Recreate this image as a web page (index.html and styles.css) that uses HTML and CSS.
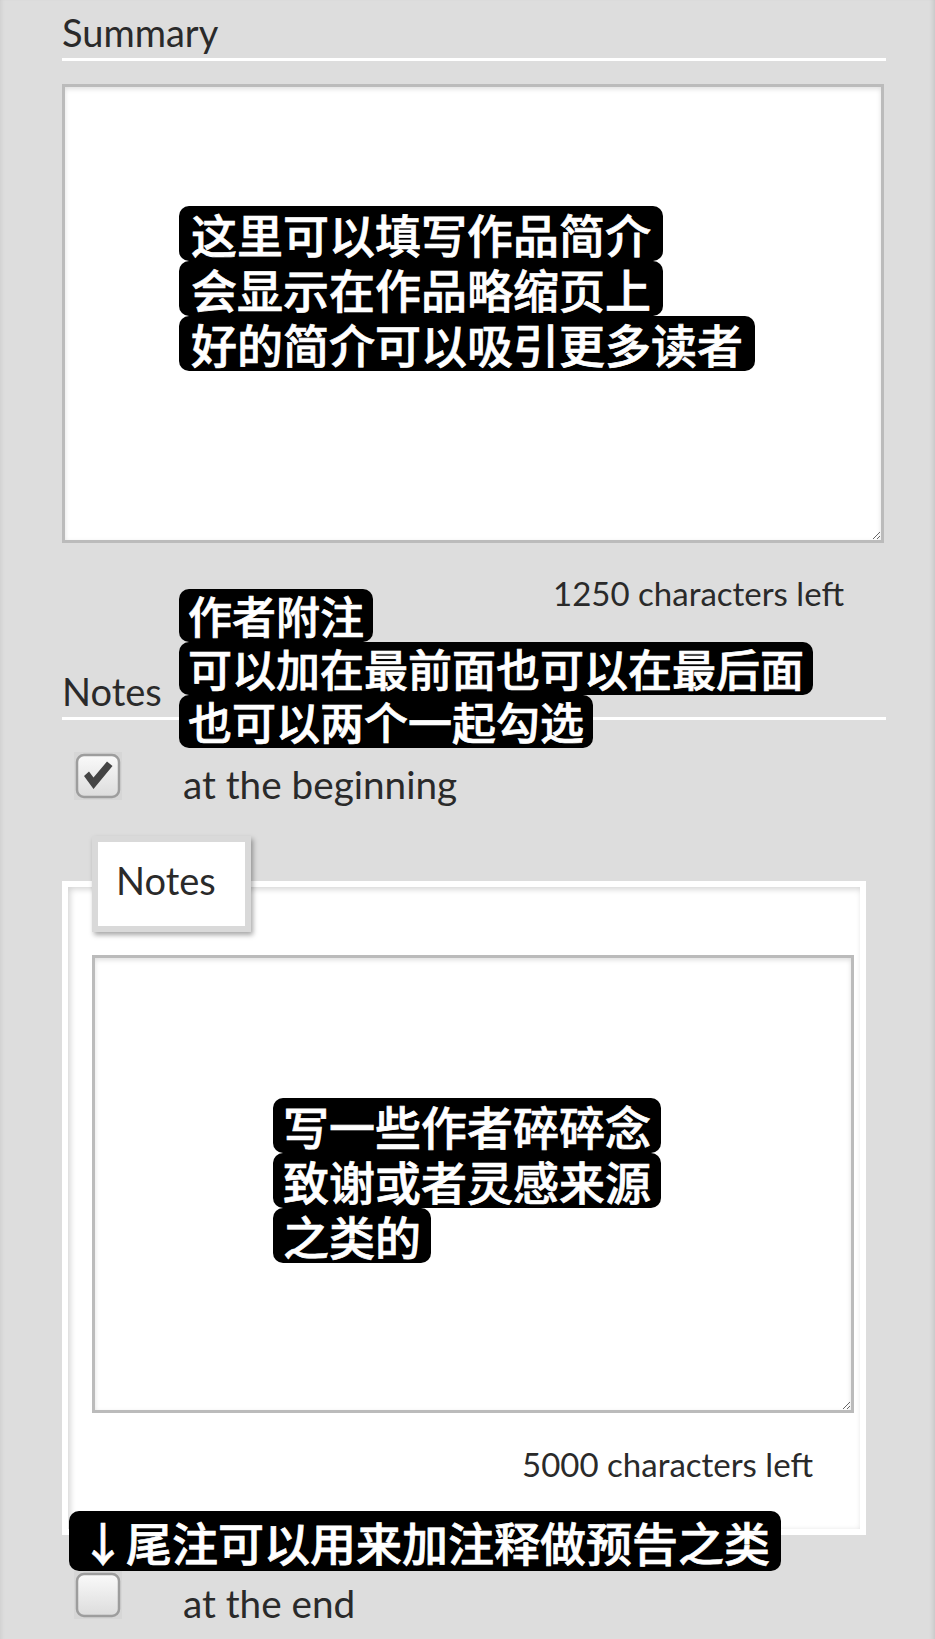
FILE: index.html
```html
<!DOCTYPE html>
<html lang="en">
<head>
<meta charset="utf-8">
<title>Summary and Notes</title>
<link rel="stylesheet" href="styles.css">
</head>
<body>
<div class="page">
  <h3 class="heading">Summary</h3>
  <textarea class="field field-summary" aria-label="Summary"></textarea>
  <p class="count count-summary">1250 characters left</p>

  <h3 class="heading heading-notes">Notes</h3>
  <label class="check-row">
    <span class="check">
      <svg width="48" height="48" viewBox="0 0 48 48">
        <defs>
          <linearGradient id="cg1" x1="0" y1="0" x2="0" y2="1">
            <stop offset="0" stop-color="#fafafa"/>
            <stop offset="1" stop-color="#dcdcdc"/>
          </linearGradient>
        </defs>
        <rect x="0" y="0" width="48" height="48" fill="#d6d6d6"/>
        <rect x="3" y="3" width="42" height="42" rx="7" fill="url(#cg1)" stroke="#9d9d9d" stroke-width="2.5"/>
        <path d="M10 24 L15 19.5 L19.5 25.5 L33 9.5 L38.5 14 L19.5 37 Z" fill="#444"/>
      </svg>
    </span>
    <span class="check-label">at the beginning</span>
  </label>

  <fieldset class="notes-set">
    <legend class="notes-legend">Notes</legend>
    <textarea class="field field-notes" aria-label="Notes"></textarea>
    <p class="count count-notes">5000 characters left</p>
  </fieldset>

  <label class="check-row check-row-end">
    <span class="check">
      <svg width="48" height="48" viewBox="0 0 48 48">
        <defs>
          <linearGradient id="cg2" x1="0" y1="0" x2="0" y2="1">
            <stop offset="0" stop-color="#fafafa"/>
            <stop offset="1" stop-color="#dcdcdc"/>
          </linearGradient>
        </defs>
        <rect x="0" y="0" width="48" height="48" fill="#d6d6d6"/>
        <rect x="3" y="3" width="42" height="42" rx="7" fill="url(#cg2)" stroke="#9d9d9d" stroke-width="2.5"/>
      </svg>
    </span>
    <span class="check-label">at the end</span>
  </label>

  <div class="ann ann-summary">
    <span class="ann-line">这里可以填写作品简介</span>
    <span class="ann-line">会显示在作品略缩页上</span>
    <span class="ann-line">好的简介可以吸引更多读者</span>
  </div>
  <div class="ann ann-notes">
    <span class="ann-line">作者附注</span>
    <span class="ann-line">可以加在最前面也可以在最后面</span>
    <span class="ann-line">也可以两个一起勾选</span>
  </div>
  <div class="ann ann-notes-text">
    <span class="ann-line">写一些作者碎碎念</span>
    <span class="ann-line">致谢或者灵感来源</span>
    <span class="ann-line">之类的</span>
  </div>
  <div class="ann ann-end">
    <span class="ann-line">↓尾注可以用来加注释做预告之类</span>
  </div>
</div>
</body>
</html>
```
FILE: styles.css
```css
html, body {
  margin: 0;
  padding: 0;
}

body {
  background: #dddddd;
  color: #2a2a2a;
  font-family: Lato, "Noto Sans", "Noto Sans CJK SC", sans-serif;
  min-height: 1639px;
}

.page {
  position: relative;
  padding: 0 49px 40px 62px;
  min-height: 1599px;
  box-shadow: inset 4px 0 4px -3px rgba(0, 0, 0, 0.08), inset -5px 0 4px -3px rgba(0, 0, 0, 0.1);
}

.heading {
  margin: 0;
  padding: 10px 0 3px;
  font-size: 38px;
  line-height: 45px;
  font-weight: 400;
  border-bottom: 3px solid #fff;
}

.heading-notes {
  margin-top: 47px;
}

.field {
  display: block;
  box-sizing: border-box;
  margin: 0;
  padding: 0;
  background: #fff;
  border: 3px solid #bbbbbb;
  border-radius: 0;
  box-shadow: inset 0 2px 5px rgba(0, 0, 0, 0.13);
  font: inherit;
  outline: none;
}

.field-summary {
  margin-top: 23px;
  width: 822px;
  height: 459px;
}

.field-notes {
  width: 762px;
  height: 458px;
}

.count {
  margin: 0;
  text-align: right;
  font-size: 33px;
  line-height: 38px;
}

.count-summary {
  margin-top: 31px;
  padding-right: 42px;
}

.count-notes {
  margin-top: 32px;
  padding-right: 41px;
}

.check-row {
  display: flex;
  align-items: flex-start;
  margin-top: 32px;
}

.check-row-end {
  margin-top: 36px;
}

.check {
  display: block;
  width: 48px;
  height: 48px;
  margin-left: 12px;
  flex: none;
}

.check svg {
  display: block;
}

.check-label {
  margin: 10px 0 0 61px;
  font-size: 38.7px;
  line-height: 45px;
}

.notes-set {
  box-sizing: border-box;
  width: 804px;
  min-width: 0;
  margin: 29px 0 0;
  padding: 23px 6px 46px 24px;
  border: 6px solid #fff;
  background: #fff;
  box-shadow: inset 2px 2px 6px rgba(0, 0, 0, 0.18);
}

.notes-legend {
  padding: 16px 29px 23px 18px;
  border: 6px solid #d9d9d9;
  background: #fff;
  box-shadow: 2px 3px 5px rgba(0, 0, 0, 0.35);
  font-size: 38px;
  line-height: 45px;
}

.ann {
  position: absolute;
  font-family: "Noto Sans CJK SC", sans-serif;
  font-weight: 500;
  color: #fff;
  -webkit-text-stroke: 0.7px #fff;
}

.ann-line {
  display: block;
  width: fit-content;
  background: #000;
  border-radius: 10px;
  white-space: nowrap;
}

.ann-summary {
  left: 179px;
  top: 206px;
  font-size: 46px;
  line-height: 55px;
}

.ann-summary .ann-line {
  padding: 0 12px;
}

.ann-notes {
  left: 179px;
  top: 589px;
  font-size: 44px;
  line-height: 53px;
}

.ann-notes .ann-line {
  padding: 0 9px;
}

.ann-notes-text {
  left: 273px;
  top: 1098px;
  font-size: 46px;
  line-height: 55px;
}

.ann-notes-text .ann-line {
  padding: 0 10px;
}

.ann-end {
  left: 69px;
  top: 1511px;
  font-size: 46px;
  line-height: 60px;
}

.ann-end .ann-line {
  padding: 0 11px;
}
```
